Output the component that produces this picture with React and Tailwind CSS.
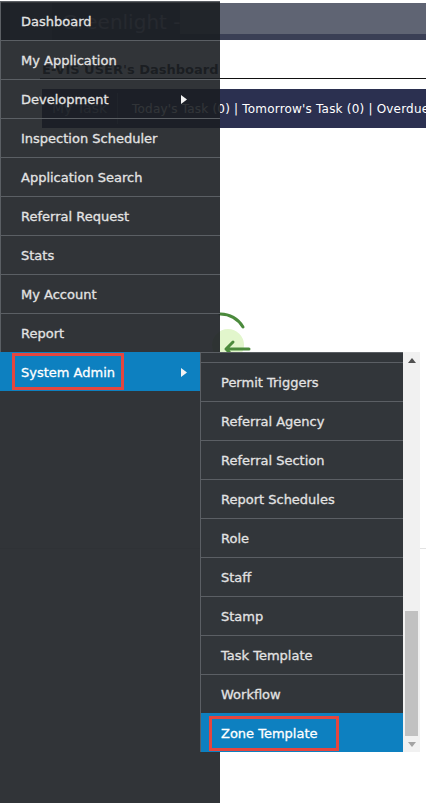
import React from "react";

const mainItems = [
  { label: "Dashboard" },
  { label: "My Application" },
  { label: "Development", sub: true },
  { label: "Inspection Scheduler" },
  { label: "Application Search" },
  { label: "Referral Request" },
  { label: "Stats" },
  { label: "My Account" },
  { label: "Report" },
  { label: "System Admin", sub: true, active: true },
];

const adminItems = [
  "Permit Triggers",
  "Referral Agency",
  "Referral Section",
  "Report Schedules",
  "Role",
  "Staff",
  "Stamp",
  "Task Template",
  "Workflow",
  "Zone Template",
];

const Caret = () => (
  <svg width="6" height="9" viewBox="0 0 6 9" className="absolute left-[180px] top-[15px]">
    <polygon points="0,0 6,4.5 0,9" fill="#f2f2f2" />
  </svg>
);

const MenuRow = ({ item }) => (
  <div
    className={
      item.active
        ? "relative flex h-[39px] items-center border-t border-l border-[#0d80c0] bg-[#0d80c0] pl-5 pt-[2px] text-white"
        : "relative flex h-[39px] items-center border-t border-l border-[#5b5f64] pl-5 pt-[2px] text-[#e3e3e3]"
    }
  >
    <span className="[-webkit-text-stroke:0.3px_currentColor]">{item.label}</span>
    {item.sub && <Caret />}
    {item.active && (
      <span className="absolute left-[11px] top-0 h-[37px] w-[112px] border-[3px] border-[#e4463f]" />
    )}
  </div>
);

const SubRow = ({ label, active }) => (
  <div
    className={
      active
        ? "relative flex h-[39px] items-center border-t border-[#0d80c0] bg-[#0d80c0] pl-5 pt-[2px] text-white"
        : "relative flex h-[39px] items-center border-t border-[#5b5f64] pl-5 pt-[2px] text-[#e3e3e3]"
    }
  >
    <span className="[-webkit-text-stroke:0.3px_currentColor]">{label}</span>
    {active && (
      <span className="absolute left-[8px] top-[2px] h-[35px] w-[130px] border-[3px] border-[#e4463f]" />
    )}
  </div>
);

const RefreshIcon = () => (
  <svg width="70" height="60" viewBox="0 0 70 60">
    <circle cx="38" cy="40" r="16" fill="#e2f6cc" />
    <path d="M 30 9 A 26 26 0 0 1 53 22" fill="none" stroke="#4b8a3c" strokeWidth="3" strokeLinecap="round" />
    <path d="M 36 44 L 59 44 M 36 44 L 43 37 M 36 44 L 43 51" fill="none" stroke="#4b8a3c" strokeWidth="3" strokeLinecap="round" />
  </svg>
);

export default function App() {
  return (
    <div className="relative h-[803px] w-[426px] overflow-hidden bg-white font-['DejaVu_Sans',sans-serif] text-[13px]">
      {/* page behind the menu */}
      <div className="pt-[3px]">
        <header className="flex h-[37px] items-center overflow-hidden bg-[#3a3f55]">
          <div className="ml-[10px] h-[37px] w-[42px] shrink-0 bg-[#48506a]" />
          <span className="ml-[10px] shrink-0 whitespace-nowrap text-[20px] leading-none text-[#8a90a2]">
            Greenlight -
          </span>
          <div className="ml-auto flex h-[31px] w-[254px] shrink-0 items-center self-start bg-[#5f6473]">
            <span className="ml-auto h-[20px] w-[6px] bg-[#c8202a]" />
          </div>
        </header>
        <div className="ml-[40px] mt-[22px] h-[17px] border-b border-[#111] pl-[2px] font-bold leading-[16px] text-[#222]">
          E-VIS USER's Dashboard
        </div>
        <div className="ml-[42px] mt-[10px] flex h-[39px] items-center overflow-hidden whitespace-nowrap bg-[#2b3050] text-[12px] text-white">
          <span className="shrink-0 px-[10px] text-[14px] text-[#8e94aa]">My Task</span>
          <span className="h-[31px] shrink-0 border-l border-[#555b78]" />
          <span className="ml-[14px] shrink-0 tracking-[0.2px]">
            Today's Task (0) | Tomorrow's Task (0) | Overdue Task (0)
          </span>
        </div>
        <div className="ml-[190px] mt-[177px]">
          <RefreshIcon />
        </div>
        <div className="mt-[183px] border-t border-[#e3e3e3]" />
      </div>

      {/* left navigation menu */}
      <nav className="absolute bottom-0 left-0 top-[1px] w-[220px] bg-[#1b1e22]/90">
        {mainItems.map((item) => (
          <MenuRow key={item.label} item={item} />
        ))}
      </nav>

      {/* System Admin submenu */}
      <div className="absolute left-[200px] top-[352px] flex h-[400px] w-[220px]">
        <div className="flex w-[203px] flex-col border-l border-t border-[#5b5f64] bg-[#32363a]">
          <div className="h-[9px]" />
          {adminItems.map((label) => (
            <SubRow key={label} label={label} active={label === "Zone Template"} />
          ))}
        </div>
        <div className="flex w-[17px] flex-col items-center bg-[#f1f1f1]">
          <div className="flex h-[17px] items-center justify-center">
            <svg width="8" height="5" viewBox="0 0 8 5">
              <polygon points="0,5 4,0 8,5" fill="#505050" />
            </svg>
          </div>
          <div className="mt-[242px] h-[125px] w-[13px] bg-[#c1c1c1]" />
          <div className="flex h-[16px] items-center justify-center">
            <svg width="8" height="5" viewBox="0 0 8 5">
              <polygon points="0,0 8,0 4,5" fill="#a3a3a3" />
            </svg>
          </div>
        </div>
      </div>
    </div>
  );
}
